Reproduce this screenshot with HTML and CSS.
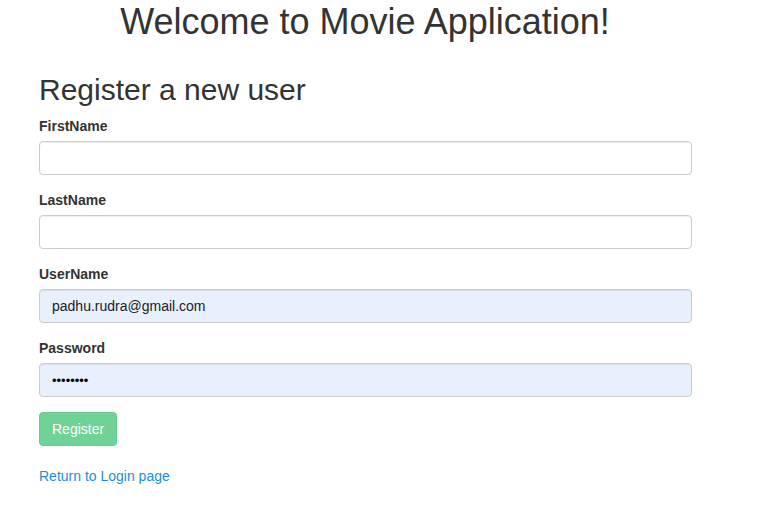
FILE: index.html
```html
<!DOCTYPE html>
<html>
<head>
<meta charset="utf-8">
<link rel="stylesheet" href="styles.css">
</head>
<body>
<div class="page">
  <h1 class="title">Welcome to Movie Application!</h1>
  <div class="form-wrap">
    <h2 class="subtitle">Register a new user</h2>
    <form class="form">
      <div class="form-group">
        <label class="label">FirstName</label>
        <input class="input" type="text">
      </div>
      <div class="form-group">
        <label class="label">LastName</label>
        <input class="input" type="text">
      </div>
      <div class="form-group">
        <label class="label">UserName</label>
        <input class="input autofill" type="text" value="padhu.rudra@gmail.com">
      </div>
      <div class="form-group">
        <label class="label">Password</label>
        <input class="input autofill pwd" type="password" value="12345678">
      </div>
      <button class="btn" type="button">Register</button>
    </form>
    <a class="link" href="#">Return to Login page</a>
  </div>
</div>
</body>
</html>
```
FILE: styles.css
```css
* { box-sizing: border-box; }
html, body { margin: 0; padding: 0; background: #fff; }
body {
  font-family: "Liberation Sans", Arial, sans-serif;
  font-size: 14px;
  line-height: 20px;
  color: #333;
}
.page { padding: 0; }
.title {
  width: 730px;
  margin: 0;
  padding-top: 2px;
  text-align: center;
  font-size: 36px;
  font-weight: normal;
  line-height: 40px;
  color: #333;
}
.form-wrap {
  padding-left: 39px;
  width: 692px;
}
.subtitle {
  margin: 31px 0 10px 0;
  font-size: 30px;
  font-weight: normal;
  line-height: 33px;
  color: #333;
}
.form { margin: 0; }
.form-group { margin-bottom: 15px; display: flex; flex-direction: column; }
.label {
  font-weight: bold;
  font-size: 14px;
  line-height: 20px;
  margin-bottom: 5px;
}
.input {
  display: block;
  width: 100%;
  height: 34px;
  padding: 6px 12px;
  font-family: "Liberation Sans", Arial, sans-serif;
  font-size: 14px;
  color: #222;
  background: #fff;
  border: 1px solid #ccc;
  border-radius: 4px;
  box-shadow: inset 0 1px 1px rgba(0,0,0,0.075);
  outline: none;
}
.autofill { background: #e8f0fe; }
.pwd { letter-spacing: 0; font-size: 13px; color: #000; }
.btn {
  display: block;
  margin-top: 0;
  height: 34px;
  padding: 6px 12px;
  font-family: "Liberation Sans", Arial, sans-serif;
  font-size: 14px;
  line-height: 20px;
  color: #fff;
  background: #70d296;
  border: 1px solid #66cc8e;
  border-radius: 4px;
}
.link {
  display: inline-block;
  margin-top: 20px;
  color: #1a8fd4;
  text-decoration: none;
  font-size: 14px;
}
```
